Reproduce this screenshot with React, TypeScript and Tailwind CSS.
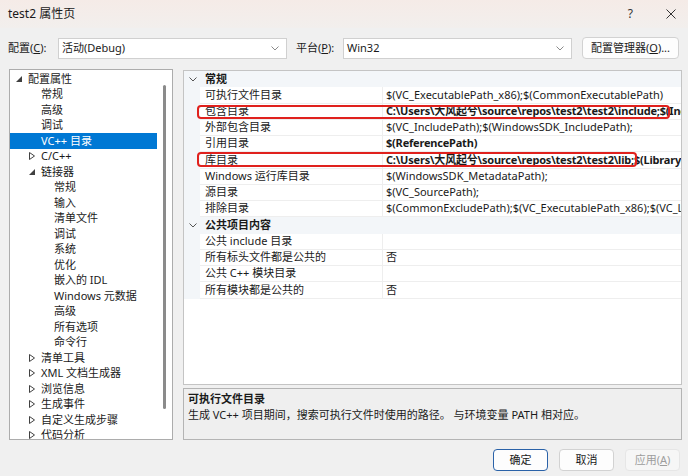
import type { ReactNode } from 'react'

const font = "font-['Segoe_UI','Noto_Sans','Noto_Sans_CJK_SC',sans-serif]"

type TreeItem = { t: string; l: 0 | 1 | 2; e?: 'open' | 'closed'; sel?: boolean }

const tree: TreeItem[] = [
  { t: '配置属性', l: 0, e: 'open' },
  { t: '常规', l: 1 },
  { t: '高级', l: 1 },
  { t: '调试', l: 1 },
  { t: 'VC++ 目录', l: 1, sel: true },
  { t: 'C/C++', l: 1, e: 'closed' },
  { t: '链接器', l: 1, e: 'open' },
  { t: '常规', l: 2 },
  { t: '输入', l: 2 },
  { t: '清单文件', l: 2 },
  { t: '调试', l: 2 },
  { t: '系统', l: 2 },
  { t: '优化', l: 2 },
  { t: '嵌入的 IDL', l: 2 },
  { t: 'Windows 元数据', l: 2 },
  { t: '高级', l: 2 },
  { t: '所有选项', l: 2 },
  { t: '命令行', l: 2 },
  { t: '清单工具', l: 1, e: 'closed' },
  { t: 'XML 文档生成器', l: 1, e: 'closed' },
  { t: '浏览信息', l: 1, e: 'closed' },
  { t: '生成事件', l: 1, e: 'closed' },
  { t: '自定义生成步骤', l: 1, e: 'closed' },
  { t: '代码分析', l: 1, e: 'closed' },
]

const indent = ['pl-[6px]', 'pl-[19px]', 'pl-[32px]']

type GridRow = { cat?: string; name?: string; value?: string; bold?: boolean }

const rows: GridRow[] = [
  { cat: '常规' },
  { name: '可执行文件目录', value: '$(VC_ExecutablePath_x86);$(CommonExecutablePath)' },
  { name: '包含目录', value: 'C:\\Users\\大风起兮\\source\\repos\\test2\\test2\\include;$(IncludePath)', bold: true },
  { name: '外部包含目录', value: '$(VC_IncludePath);$(WindowsSDK_IncludePath);' },
  { name: '引用目录', value: '$(ReferencePath)', bold: true },
  { name: '库目录', value: 'C:\\Users\\大风起兮\\source\\repos\\test2\\test2\\lib;$(LibraryPath)', bold: true },
  { name: 'Windows 运行库目录', value: '$(WindowsSDK_MetadataPath);' },
  { name: '源目录', value: '$(VC_SourcePath);' },
  { name: '排除目录', value: '$(CommonExcludePath);$(VC_ExecutablePath_x86);$(VC_LibraryPath_x86)' },
  { cat: '公共项目内容' },
  { name: '公共 include 目录', value: '' },
  { name: '所有标头文件都是公共的', value: '否' },
  { name: '公共 C++ 模块目录', value: '' },
  { name: '所有模块都是公共的', value: '否' },
]

function Chevron({ className }: { className?: string }) {
  return (
    <svg width="8" height="5" viewBox="0 0 8 5" className={className}>
      <polyline points="0.5,0.5 4,4 7.5,0.5" fill="none" stroke="currentColor" strokeWidth="1" />
    </svg>
  )
}

function Expander({ kind, selected }: { kind?: 'open' | 'closed'; selected?: boolean }) {
  const color = selected ? '#ffffff' : '#404040'
  return (
    <span className="flex w-[12px] shrink-0 items-center">
      {kind === 'open' && (
        <svg width="6" height="6" viewBox="0 0 6 6">
          <polygon points="6,0 6,6 0,6" fill={color} />
        </svg>
      )}
      {kind === 'closed' && (
        <svg width="6" height="8" viewBox="0 0 6 8">
          <polygon points="0.5,0.5 5.5,4 0.5,7.5" fill="none" stroke={color} strokeWidth="1" />
        </svg>
      )}
    </span>
  )
}

function Combo({ value, className }: { value: string; className: string }) {
  return (
    <div
      className={`flex h-[21px] items-center justify-between border border-[#d0d0d0] bg-white pl-[3px] pr-[7px] ${className}`}
    >
      <span>{value}</span>
      <Chevron className="text-[#8a8a8a]" />
    </div>
  )
}

function Button({ children, variant }: { children: ReactNode; variant?: 'default' | 'disabled' }) {
  const look =
    variant === 'default'
      ? 'border-[#2a62a8] bg-[#fdfdfd] text-[#1a1a1a]'
      : variant === 'disabled'
        ? 'border-[#e6e6e6] bg-[#f6f6f6] text-[#9d9d9d]'
        : 'border-[#d2d2d2] bg-[#fdfdfd] text-[#1a1a1a]'
  return (
    <div className={`flex h-[22px] w-[55px] items-center justify-center rounded-[4px] border ${look}`}>
      {children}
    </div>
  )
}

export default function App() {
  return (
    <div className={`relative flex h-[476px] w-[688px] flex-col overflow-hidden bg-[#f0f0f0] text-[11px] text-[#1a1a1a] ${font}`}>
      {/* title bar */}
      <div className="flex h-[28px] shrink-0 items-center bg-gradient-to-b from-[#f5ebe7] to-[#f2efed] pl-[8px] pr-[12px] text-[12px]">
        <span>test2 属性页</span>
        <span className="ml-auto mr-[33px] text-[12px] text-[#333]">?</span>
        <svg width="10" height="10" viewBox="0 0 10 10">
          <path d="M0.5 0.5 9.5 9.5 M9.5 0.5 0.5 9.5" stroke="#333" strokeWidth="1" />
        </svg>
      </div>

      {/* configuration row */}
      <div className="mt-[9px] flex h-[22px] shrink-0 items-center pl-[8px]">
        <span className="w-[50px]">
          配置(<span className="underline">C</span>):
        </span>
        <Combo value="活动(Debug)" className="w-[229px]" />
        <span className="ml-[9px] w-[47px]">
          平台(<span className="underline">P</span>):
        </span>
        <Combo value="Win32" className="w-[229px]" />
        <div className="ml-[10px] flex h-[22px] w-[97px] items-center justify-center rounded-[4px] border border-[#d2d2d2] bg-[#fdfdfd]">
          配置管理器(<span className="underline">O</span>)...
        </div>
      </div>

      {/* main area */}
      <div className="mt-[10px] flex h-[371px] shrink-0 pl-[9px]">
        {/* tree */}
        <div className="flex h-[371px] w-[164px] overflow-hidden border border-[#acacac] bg-white">
          <div className="w-[147px] pt-[1px]">
            {tree.map((it, i) => (
              <div
                key={i}
                className={`flex h-[15.5px] items-center whitespace-nowrap ${indent[it.l]} ${it.sel ? 'bg-[#0078d4] text-white' : ''}`}
              >
                <Expander kind={it.e} selected={it.sel} />
                <span>{it.t}</span>
              </div>
            ))}
          </div>
          <div className="flex-1 pl-[6px] pt-[15px]">
            <div className="h-[324px] w-[3px] rounded-full bg-[#8b8b8b]" />
          </div>
        </div>

        {/* right column */}
        <div className="ml-[10px] flex w-[499px] flex-col">
          <div className="mt-[1px] h-[315px] overflow-hidden border border-[#c4c4c4] bg-white">
            {rows.map((r, i) =>
              r.cat ? (
                <div key={i} className="flex h-[16.25px] items-center bg-[#f3f6f9]">
                  <span className="flex w-[16px] justify-center pl-[2px]">
                    <Chevron className="text-[#555]" />
                  </span>
                  <span className="pl-[5px] font-bold">{r.cat}</span>
                </div>
              ) : (
                <div key={i} className="flex h-[16.25px]">
                  <div className="w-[16px] shrink-0 bg-[#f3f6f9]" />
                  <div className="flex w-[183px] shrink-0 items-center whitespace-nowrap border-b border-r border-[#eeeeee] pl-[5px]">
                    {r.name}
                  </div>
                  <div
                    className={`flex min-w-0 flex-1 items-center overflow-hidden whitespace-nowrap border-b border-[#eeeeee] pl-[3px] ${r.bold ? 'font-bold tracking-[-0.2px]' : ''}`}
                  >
                    {r.value}
                  </div>
                </div>
              ),
            )}
          </div>

          <div className="mt-[3px] h-[52px] border border-[#b4b4b4] bg-[#efefef] px-[4px] pt-[2px]">
            <div className="font-bold leading-[16px]">可执行文件目录</div>
            <div className="leading-[16px]">生成 VC++ 项目期间，搜索可执行文件时使用的路径。 与环境变量 PATH 相对应。</div>
          </div>
        </div>
      </div>

      {/* buttons */}
      <div className="mt-[9px] flex justify-end gap-[11px] pr-[8px]">
        <Button variant="default">确定</Button>
        <Button>取消</Button>
        <Button variant="disabled">
          应用(<span className="underline">A</span>)
        </Button>
      </div>

      {/* red annotation boxes */}
      <div className="absolute left-[197px] top-[105px] h-[14px] w-[473px] rounded-[4px] border-2 border-[#e0211d]" />
      <div className="absolute left-[197px] top-[152px] h-[15px] w-[440px] rounded-[4px] border-2 border-[#e0211d]" />
    </div>
  )
}
